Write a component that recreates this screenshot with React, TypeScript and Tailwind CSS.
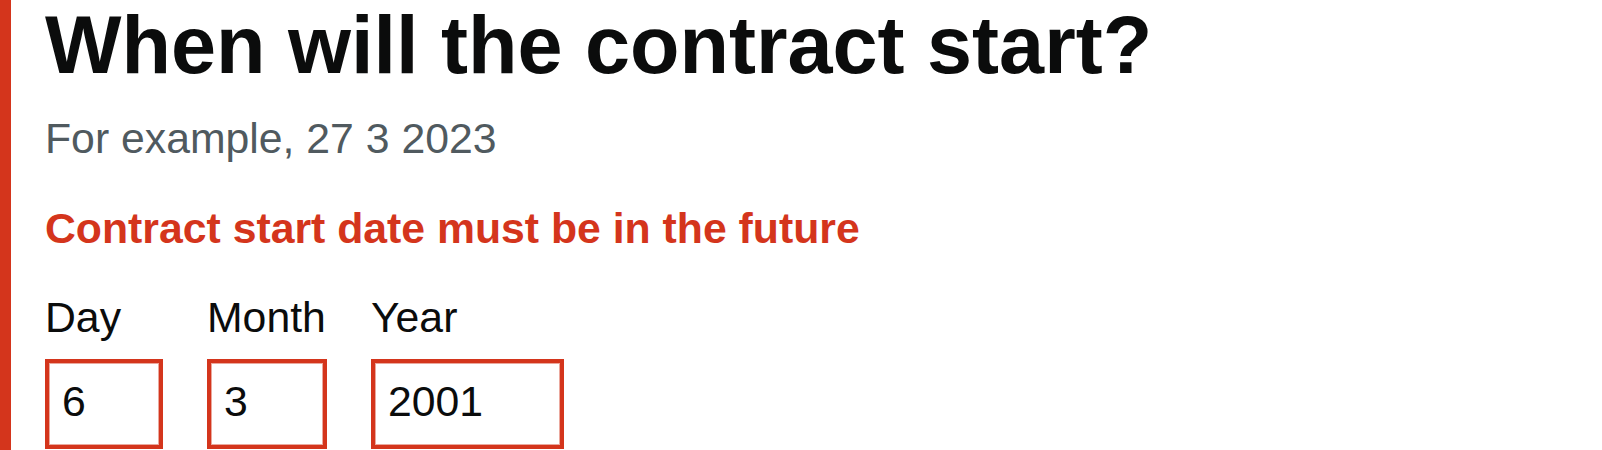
import React from "react";

interface DateField {
  id: string;
  label: string;
  value: string;
  widthClass: string;
}

const fields: DateField[] = [
  { id: "day", label: "Day", value: "6", widthClass: "w-[118px]" },
  { id: "month", label: "Month", value: "3", widthClass: "w-[120px]" },
  { id: "year", label: "Year", value: "2001", widthClass: "w-[193px]" },
];

const DateInput: React.FC<{ field: DateField }> = ({ field }) => (
  <div className="flex flex-col">
    <label
      htmlFor={field.id}
      className="text-[42.75px] leading-[56.25px] text-[#0b0c0c]"
    >
      {field.label}
    </label>
    <input
      id={field.id}
      type="text"
      inputMode="numeric"
      defaultValue={field.value}
      className={`${field.widthClass} mt-[14px] h-[90px] box-border border-4 border-[#d4351c] shadow-[inset_0_0_0_1px_#eba89d] bg-white pl-[13px] pb-[5px] text-[42.75px] text-[#0b0c0c] outline-none rounded-none`}
    />
  </div>
);

export default function App() {
  return (
    <div
      className="flex min-h-screen bg-white"
      style={{ fontFamily: '"Liberation Sans", Arial, sans-serif' }}
    >
      <div className="w-[11px] shrink-0 bg-[#d4351c]" />
      <fieldset className="pl-[34px] m-0 border-0 p-0">
        <legend className="contents">
          <h1 className="m-0 text-[81px] leading-[90px] font-bold text-[#0b0c0c]">
            When will the contract start?
          </h1>
        </legend>
        <p className="mt-[20px] text-[42.75px] leading-[56.25px] text-[#505a5f]">
          For example, 27 3 2023
        </p>
        <p className="mt-[34px] text-[42.75px] leading-[56.25px] font-bold text-[#d4351c]">
          Contract start date must be in the future
        </p>
        <div className="mt-[32px] flex gap-[44px]">
          {fields.map((field) => (
            <DateInput key={field.id} field={field} />
          ))}
        </div>
      </fieldset>
    </div>
  );
}
